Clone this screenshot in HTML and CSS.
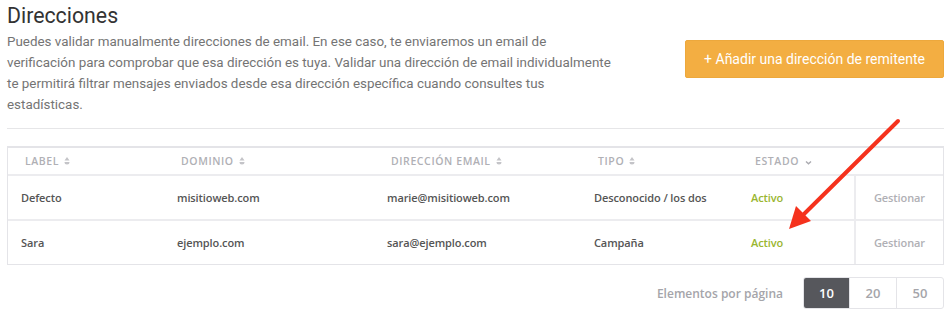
FILE: index.html
```
<!DOCTYPE html>
<html lang="es">
<head>
<meta charset="utf-8">
<title>Direcciones</title>
<link rel="stylesheet" href="styles.css">
</head>
<body>
<div class="page">
  <div class="top">
    <div class="intro">
      <h1 class="title">Direcciones</h1>
      <p class="desc">Puedes validar manualmente direcciones de email. En ese caso, te enviaremos un email de verificación para comprobar que esa dirección es tuya. Validar una dirección de email individualmente te permitirá filtrar mensajes enviados desde esa dirección específica cuando consultes tus estadísticas.</p>
    </div>
    <button class="add-btn">+ Añadir una dirección de remitente</button>
  </div>
  <div class="divider"></div>
  <div class="table">
    <div class="row head">
      <div class="th">LABEL <svg class="sort" width="6" height="9" viewBox="0 0 6 9"><path d="M3 0L5.5 3.6H0.5Z M0.5 5H5.5A2.5 2.5 0 0 1 0.5 5Z" fill="#c4c4c8"/></svg></div>
      <div class="th">DOMINIO <svg class="sort" width="6" height="9" viewBox="0 0 6 9"><path d="M3 0L5.5 3.6H0.5Z M0.5 5H5.5A2.5 2.5 0 0 1 0.5 5Z" fill="#c4c4c8"/></svg></div>
      <div class="th">DIRECCIÓN EMAIL <svg class="sort" width="6" height="9" viewBox="0 0 6 9"><path d="M3 0L5.5 3.6H0.5Z M0.5 5H5.5A2.5 2.5 0 0 1 0.5 5Z" fill="#c4c4c8"/></svg></div>
      <div class="th">TIPO <svg class="sort" width="6" height="9" viewBox="0 0 6 9"><path d="M3 0L5.5 3.6H0.5Z M0.5 5H5.5A2.5 2.5 0 0 1 0.5 5Z" fill="#c4c4c8"/></svg></div>
      <div class="th">ESTADO <svg class="caret" width="7" height="5" viewBox="0 0 7 5"><path d="M1 1.5L3.5 3.8L6 1.5" stroke="#aaaab0" stroke-width="1.4" fill="none"/></svg></div>
      <div class="th"></div>
    </div>
    <div class="row">
      <div class="td">Defecto</div>
      <div class="td">misitioweb.com</div>
      <div class="td">marie@misitioweb.com</div>
      <div class="td">Desconocido / los dos</div>
      <div class="td active">Activo</div>
      <div class="td manage">Gestionar</div>
    </div>
    <div class="row">
      <div class="td">Sara</div>
      <div class="td">ejemplo.com</div>
      <div class="td">sara@ejemplo.com</div>
      <div class="td">Campaña</div>
      <div class="td active">Activo</div>
      <div class="td manage">Gestionar</div>
    </div>
  </div>
  <div class="pager">
    <span class="pager-label">Elementos por página</span>
    <div class="pager-group">
      <span class="pg on">10</span>
      <span class="pg">20</span>
      <span class="pg">50</span>
    </div>
  </div>
  <svg class="arrow" width="950" height="319" viewBox="0 0 950 319">
    <line x1="898" y1="121" x2="800" y2="218" stroke="#f5321d" stroke-width="4" stroke-linecap="round"/>
    <path d="M789 229L796 206L811 221Z" fill="#f5321d"/>
  </svg>
</div>
</body>
</html>
```
FILE: styles.css
```
* { box-sizing: border-box; }
html, body { margin: 0; padding: 0; background: #fff; }
.page {
  position: relative;
  width: 950px;
  height: 319px;
  padding: 0 6px 0 7px;
  overflow: hidden;
}
.top {
  display: flex;
  justify-content: space-between;
  align-items: flex-start;
}
.intro { width: 609px; }
.title {
  font-family: Roboto, "Liberation Sans", sans-serif;
  font-weight: 400;
  font-size: 21.3px;
  line-height: 26px;
  color: #333;
  margin: 3px 0 0 0;
}
.desc {
  font-family: Roboto, "Liberation Sans", sans-serif;
  font-weight: 400;
  font-size: 13.4px;
  line-height: 21px;
  color: #747474;
  margin: 2px 0 0 0;
}
.add-btn {
  margin-top: 40px;
  width: 259px;
  height: 38px;
  background: #f3ae42;
  border: 1px solid #eda83c;
  border-radius: 2px;
  color: #fff;
  font-family: Roboto, "Liberation Sans", sans-serif;
  font-size: 14px;
  padding: 0;
}
.divider {
  margin-top: 13px;
  height: 1px;
  background: #e6e6e8;
}
.table {
  margin-top: 17px;
  border: 1px solid #e4e4e8;
  border-top-width: 2px;
  font-family: "Open Sans", sans-serif;
}
.row {
  display: grid;
  grid-template-columns: 156px 210px 207px 157px 116px 1fr;
  height: 45px;
  border-top: 2px solid #ececef;
}
.row.head {
  height: 26px;
  border-top: none;
}
.th {
  display: flex;
  align-items: center;
  padding-left: 17px;
  font-size: 10.5px;
  font-weight: 600;
  letter-spacing: 0.6px;
  color: #b0b0b5;
}
.sort { margin-left: 5px; }
.caret { margin-left: 6px; margin-top: 3px; }
.td {
  display: flex;
  align-items: center;
  padding-left: 13px;
  font-size: 11px;
  letter-spacing: -0.1px;
  font-weight: 600;
  color: #555;
}
.td.active { color: #9ab62f; }
.td.manage {
  justify-content: center;
  padding-left: 0;
  border-left: 2px solid #ececef;
  color: #b0b0b5;
}
.pager {
  margin-top: 12px;
  display: flex;
  justify-content: flex-end;
  align-items: center;
  font-family: "Open Sans", sans-serif;
}
.pager-label {
  font-size: 12px;
  font-weight: 600;
  color: #a5a5aa;
  margin-right: 20px;
}
.pager-group {
  display: flex;
  border: 1px solid #e4e4e8;
  border-radius: 3px;
  overflow: hidden;
}
.pg {
  width: 47px;
  height: 30px;
  display: flex;
  align-items: center;
  justify-content: center;
  font-size: 13px;
  font-weight: 600;
  color: #a5a5aa;
  border-left: 1px solid #e4e4e8;
}
.pg:first-child { border-left: none; width: 45px; }
.pg.on { background: #56575c; color: #fff; }
.arrow {
  position: absolute;
  left: 0;
  top: 0;
  pointer-events: none;
}
```
